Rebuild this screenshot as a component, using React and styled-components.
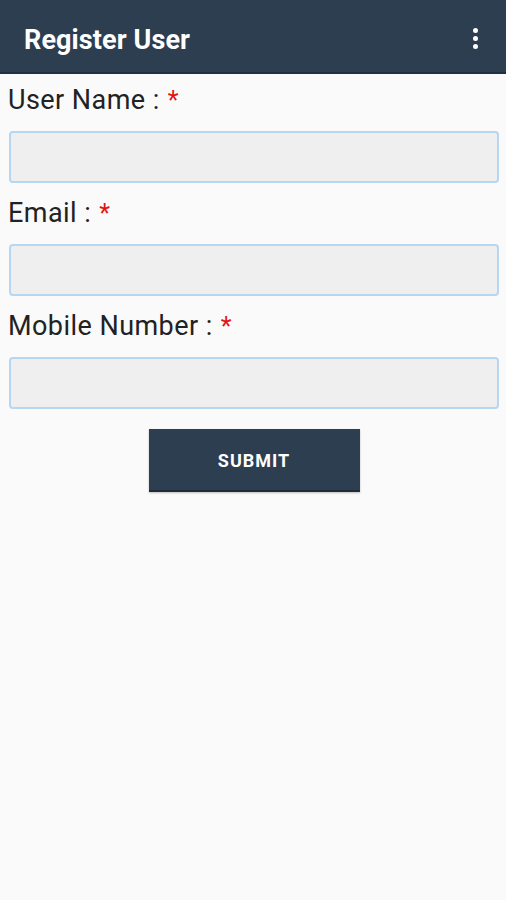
import React from "react";
import styled, { createGlobalStyle } from "styled-components";

const Global = createGlobalStyle`
  html, body { margin: 0; padding: 0; background: #fafafa; }
  body { font-family: Roboto, "Liberation Sans", sans-serif; }
`;

const Page = styled.div`
  width: 506px;
  min-height: 900px;
  background: #fafafa;
`;

const AppBar = styled.header`
  height: 72px;
  background: #2d3e50;
  border-bottom: 2px solid #203040;
  display: flex;
  align-items: center;
  justify-content: space-between;
  padding: 0 28px 0 24px;
  box-sizing: content-box;
`;

const Title = styled.h1`
  margin: 0;
  color: #ffffff;
  font-family: Roboto, sans-serif;
  font-weight: 700;
  font-size: 27px;
  letter-spacing: 0.1px;
  padding-top: 8px;
`;

const Kebab = styled.div`
  display: flex;
  flex-direction: column;
  gap: 3px;
  padding-top: 4px;
  span {
    width: 5px;
    height: 5px;
    border-radius: 50%;
    background: #ffffff;
  }
`;

const Form = styled.form`
  display: flex;
  flex-direction: column;
  padding: 0 8px;
`;

const Label = styled.label`
  display: block;
  font-family: Roboto, sans-serif;
  font-size: 27px;
  line-height: 32px;
  letter-spacing: 0.45px;
  color: #222222;
  margin-top: ${(p) => (p.$first ? "10px" : "14px")};
`;

const Star = styled.span`
  color: #e01414;
  margin-left: 8px;
  font-size: 25px;
`;

const Input = styled.input`
  display: block;
  box-sizing: border-box;
  width: 490px;
  height: 52px;
  margin: 14px 0 0 1px;
  background: #efefef;
  border: 2px solid #b6d6f2;
  border-radius: 4px;
  outline: none;
`;

const Button = styled.button`
  align-self: center;
  width: 211px;
  height: 63px;
  margin-top: 20px;
  margin-left: 2px;
  padding-top: 2px;
  background: #2d3e50;
  border: none;
  border-bottom: 2px solid #1f2c3a;
  color: #ffffff;
  font-family: Roboto, sans-serif;
  font-weight: 700;
  font-size: 18px;
  letter-spacing: 1px;
  box-shadow: 0 1px 2px rgba(0, 0, 0, 0.25);
`;

export default function App() {
  return (
    <Page>
      <Global />
      <AppBar>
        <Title>Register User</Title>
        <Kebab>
          <span />
          <span />
          <span />
        </Kebab>
      </AppBar>
      <Form onSubmit={(e) => e.preventDefault()}>
        <Label $first>
          User Name :<Star>*</Star>
        </Label>
        <Input type="text" />
        <Label>
          Email :<Star>*</Star>
        </Label>
        <Input type="email" />
        <Label>
          Mobile Number :<Star>*</Star>
        </Label>
        <Input type="tel" />
        <Button type="submit">SUBMIT</Button>
      </Form>
    </Page>
  );
}
